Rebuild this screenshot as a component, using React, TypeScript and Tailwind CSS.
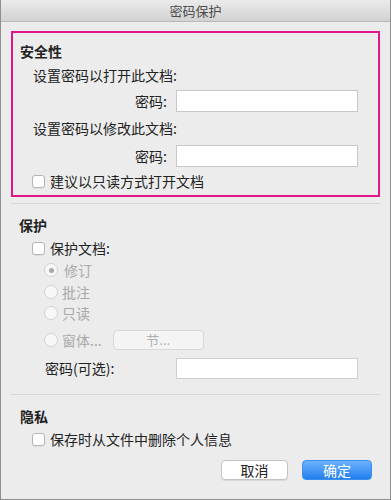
const font = { fontFamily: '"Noto Sans CJK SC", "Noto Sans", sans-serif' };

function Checkbox() {
    return <span className="w-[13px] h-[13px] rounded-[3px] border border-[#b5b5b5] bg-white shadow-[0_1px_0_rgba(0,0,0,0.05)] shrink-0"></span>;
}

function Radio({ checked }: { checked?: boolean }) {
    return (
        <span className="w-[14px] h-[14px] rounded-full border border-[#d2d2d2] bg-[#f7f7f7] flex items-center justify-center shrink-0">
            {checked && <span className="w-[5px] h-[5px] rounded-full bg-[#a8a8a8]"></span>}
        </span>
    );
}

function Field() {
    return <div className="w-[182px] h-[22px] bg-white border border-[#c8c8c8]"></div>;
}

export default function App() {
    return (
        <div style={font} className="w-[391px] h-[500px] bg-[#ececec] border-x border-b border-[#8f8f8f] flex flex-col text-[14px] text-[#222] overflow-hidden">

            {/* Title bar */}
            <div className="h-[22px] shrink-0 bg-gradient-to-b from-[#ebebeb] to-[#d2d2d2] border-b border-[#b9b9b9] flex items-center justify-center text-[13px] text-[#4a4a4a]">
                密码保护
            </div>

            <div className="px-[10px] pt-[9px] flex flex-col">

                {/* Security (highlighted) */}
                <div className="h-[166px] border-2 border-[#e0168a] flex flex-col">
                    <div className="h-[20px] mt-[8px] pl-[7px] flex items-center font-bold">安全性</div>
                    <div className="h-[20px] mt-[4px] pl-[20px] flex items-center">设置密码以打开此文档:</div>
                    <div className="mt-[5px] flex items-center">
                        <span className="w-[163px] pr-[9px] text-right">密码:</span>
                        <Field />
                    </div>
                    <div className="h-[20px] mt-[6px] pl-[20px] flex items-center">设置密码以修改此文档:</div>
                    <div className="mt-[7px] flex items-center">
                        <span className="w-[163px] pr-[9px] text-right">密码:</span>
                        <Field />
                    </div>
                    <div className="h-[20px] mt-[4px] pl-[19px] flex items-center gap-[5px]">
                        <Checkbox />
                        <span>建议以只读方式打开文档</span>
                    </div>
                </div>

                <div className="mt-[6px] h-px bg-[#d6d6d6]"></div>

                {/* Protection */}
                <div className="h-[20px] mt-[11px] pl-[8px] flex items-center font-bold">保护</div>
                <div className="h-[20px] mt-[3px] pl-[21px] flex items-center gap-[5px]">
                    <Checkbox />
                    <span>保护文档:</span>
                </div>
                <div className="pl-[33px] flex flex-col text-[#a9a9a9]">
                    <div className="h-[20px] mt-[2px] flex items-center gap-[6px]">
                        <Radio checked />
                        <span>修订</span>
                    </div>
                    <div className="h-[20px] mt-[2px] flex items-center gap-[4px]">
                        <Radio />
                        <span>批注</span>
                    </div>
                    <div className="h-[20px] mt-[1px] flex items-center gap-[4px]">
                        <Radio />
                        <span>只读</span>
                    </div>
                    <div className="h-[20px] mt-[7px] flex items-center gap-[4px]">
                        <Radio />
                        <span>窗体...</span>
                        <button className="ml-[7px] w-[91px] h-[20px] rounded-[4px] border border-[#d8d8d8] bg-[#f4f4f4] text-[#b0b0b0] text-[13px] flex items-center justify-center">
                            节...
                        </button>
                    </div>
                </div>
                <div className="mt-[8px] flex items-center">
                    <span className="w-[165px] pl-[34px]">密码(可选):</span>
                    <div className="w-[182px] h-[21px] bg-white border border-[#cfcfcf]"></div>
                </div>

                <div className="mt-[15px] h-px bg-[#d6d6d6]"></div>

                {/* Privacy */}
                <div className="h-[20px] mt-[11px] pl-[9px] flex items-center font-bold">隐私</div>
                <div className="h-[20px] mt-[3px] pl-[21px] flex items-center gap-[5px]">
                    <Checkbox />
                    <span>保存时从文件中删除个人信息</span>
                </div>

                {/* Buttons */}
                <div className="mt-[11px] flex justify-end gap-[14px] pr-[8px]">
                    <button className="w-[67px] h-[20px] rounded-[4px] border border-[#c4c4c4] bg-white shadow-[0_1px_0_rgba(0,0,0,0.08)] text-[14px] text-[#222] flex items-center justify-center">
                        取消
                    </button>
                    <button className="w-[70px] h-[20px] rounded-[4px] border border-[#3a8ef0] bg-gradient-to-b from-[#6cb3fa] to-[#1f7ef0] text-[14px] text-white flex items-center justify-center">
                        确定
                    </button>
                </div>
            </div>
        </div>
    );
}
